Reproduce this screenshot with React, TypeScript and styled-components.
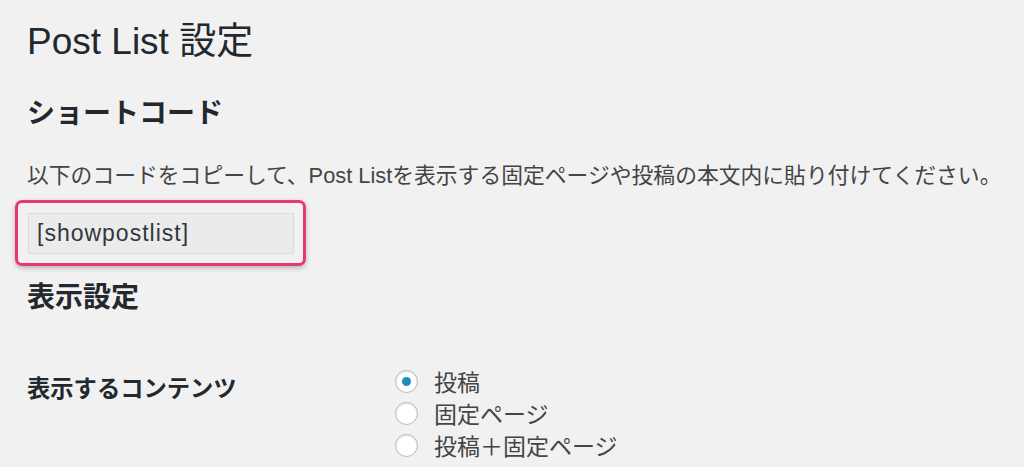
import React from "react";
import styled, { createGlobalStyle } from "styled-components";

const GlobalStyle = createGlobalStyle`
  html, body {
    margin: 0;
    padding: 0;
    background: #f1f1f1;
    font-family: "Liberation Sans", "Noto Sans CJK JP", sans-serif;
    color: #444;
  }
`;

const Wrap = styled.div`
  padding: 18px 27px 0 27px;
  width: 1024px;
  height: 467px;
  box-sizing: border-box;
  overflow: hidden;
`;

const Title = styled.h1`
  margin: 0;
  font-size: 37px;
  font-weight: 400;
  line-height: 48px;
  color: #23282d;
`;

const SectionTitle = styled.h2<{ $top: number }>`
  margin: ${({ $top }) => $top}px 0 0 0;
  font-size: 28px;
  font-weight: 700;
  line-height: 36px;
  color: #23282d;
`;

const Lead = styled.p`
  margin: 30px 0 0 0;
  font-size: 21.8px;
  line-height: 28px;
  color: #444;
  white-space: nowrap;
`;

const Highlight = styled.div`
  margin: 10px 0 0 -12px;
  width: 291px;
  height: 66px;
  box-sizing: border-box;
  border: 3px solid #e8386d;
  border-radius: 7px;
  box-shadow: 0 2px 5px rgba(0, 0, 0, 0.25);
  padding: 10px 10px 0 10px;
`;

const CodeField = styled.input`
  display: block;
  width: 266px;
  height: 41px;
  box-sizing: border-box;
  margin: 0;
  border: 1px solid #dcdcdc;
  background: #ebebeb;
  font-family: "Liberation Sans", "Noto Sans CJK JP", sans-serif;
  font-size: 23px;
  letter-spacing: 1px;
  color: #32373c;
  padding: 0 8px;
  outline: none;
`;

const FormRow = styled.div`
  display: grid;
  grid-template-columns: 368px 1fr;
  margin-top: 49px;
`;

const RowLabel = styled.div`
  font-size: 23.3px;
  font-weight: 700;
  color: #23282d;
  line-height: 32px;
  padding-top: 8px;
`;

const RadioList = styled.div`
  display: flex;
  flex-direction: column;
`;

const RadioLine = styled.label`
  display: flex;
  align-items: center;
  gap: 16px;
  height: 32px;
  font-size: 23px;
  color: #444;
`;

const RadioDot = styled.span<{ $checked: boolean }>`
  width: 23px;
  height: 23px;
  box-sizing: border-box;
  border-radius: 50%;
  border: 1px solid #b4b9be;
  background: #fff;
  box-shadow: inset 0 1px 2px rgba(0, 0, 0, 0.1);
  display: flex;
  align-items: center;
  justify-content: center;
  &::after {
    content: "";
    width: 9px;
    height: 9px;
    border-radius: 50%;
    background: #1e8cbe;
    display: ${({ $checked }) => ($checked ? "block" : "none")};
  }
`;

const options = ["投稿", "固定ページ", "投稿＋固定ページ"];

export default function App() {
  return (
    <Wrap>
      <GlobalStyle />
      <Title>Post List 設定</Title>
      <SectionTitle $top={30}>ショートコード</SectionTitle>
      <Lead>
        以下のコードをコピーして、Post Listを表示する固定ページや投稿の本文内に貼り付けてください。
      </Lead>
      <Highlight>
        <CodeField readOnly value="[showpostlist]" />
      </Highlight>
      <SectionTitle $top={14}>表示設定</SectionTitle>
      <FormRow>
        <RowLabel>表示するコンテンツ</RowLabel>
        <RadioList>
          {options.map((o, i) => (
            <RadioLine key={o}>
              <RadioDot $checked={i === 0} />
              {o}
            </RadioLine>
          ))}
        </RadioList>
      </FormRow>
    </Wrap>
  );
}
